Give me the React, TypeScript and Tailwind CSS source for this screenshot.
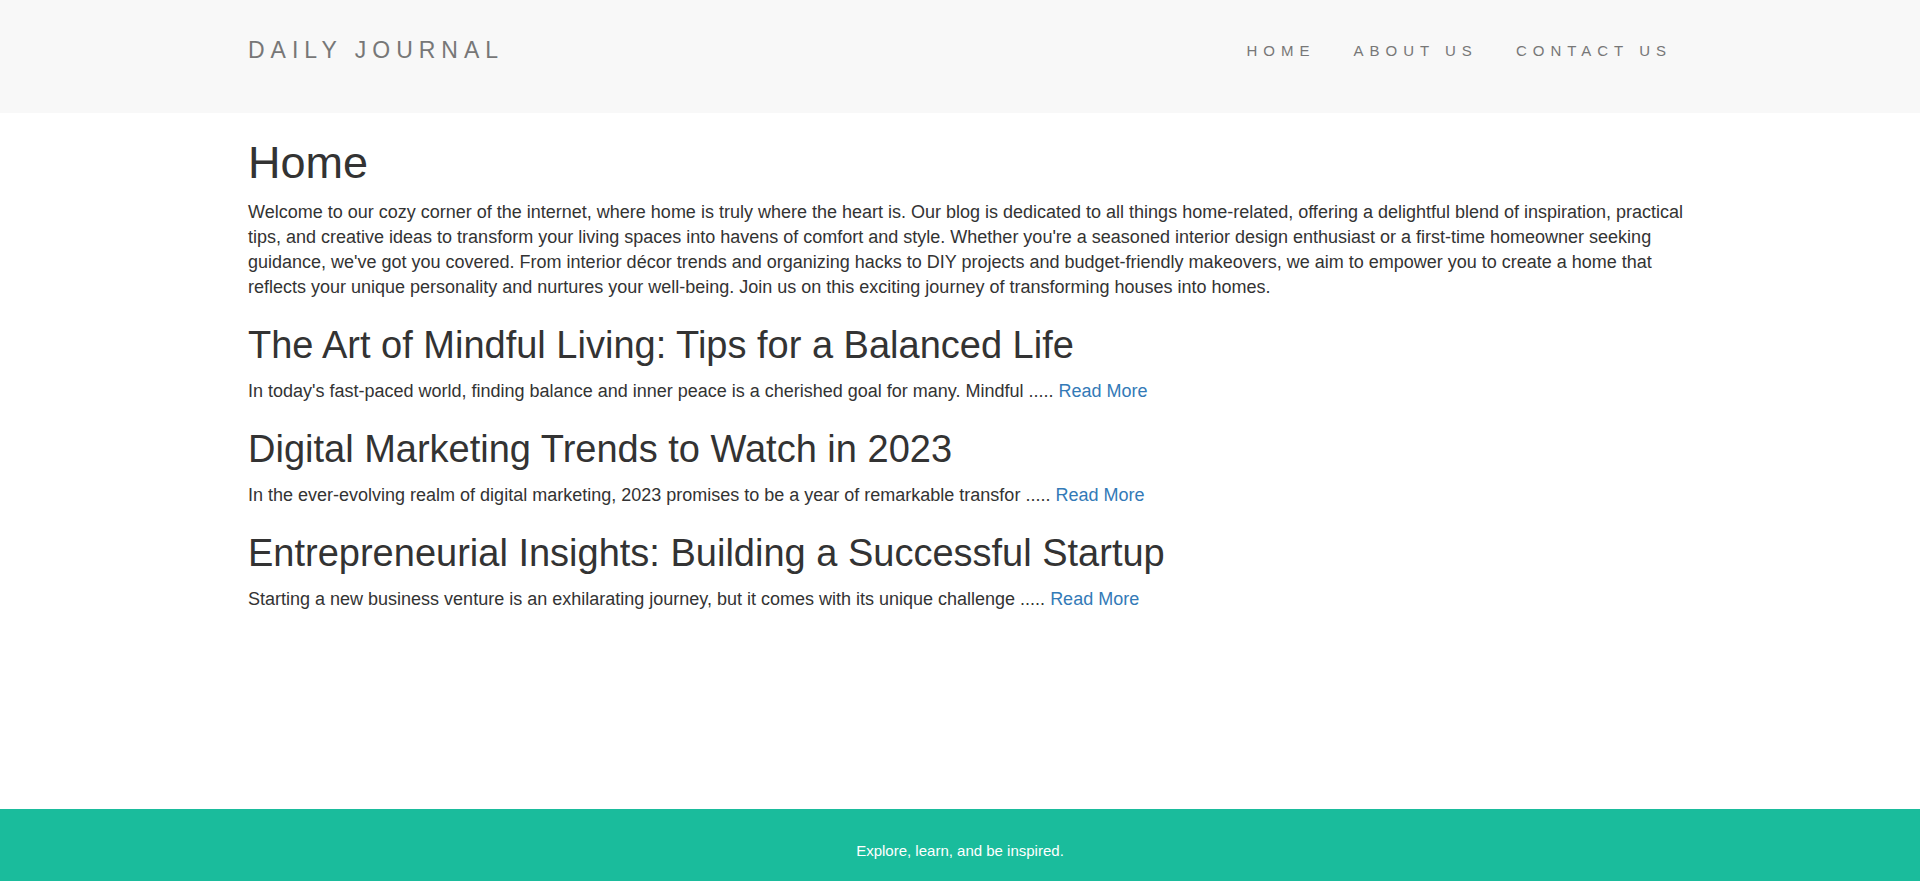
const posts = [
  { title: "The Art of Mindful Living: Tips for a Balanced Life", excerpt: "In today's fast-paced world, finding balance and inner peace is a cherished goal for many. Mindful ....." },
  { title: "Digital Marketing Trends to Watch in 2023", excerpt: "In the ever-evolving realm of digital marketing, 2023 promises to be a year of remarkable transfor ....." },
  { title: "Entrepreneurial Insights: Building a Successful Startup", excerpt: "Starting a new business venture is an exhilarating journey, but it comes with its unique challenge ....." },
];

const links = ["HOME", "ABOUT US", "CONTACT US"];

export default function App() {
  return (
    <div className="flex min-h-screen flex-col bg-white font-['Liberation_Sans',Arial,sans-serif] text-lg leading-[25px] text-[#333333]">
      <nav className="bg-[#f8f8f8] pt-[30px] pb-[30px]">
        <div className="mx-auto flex min-h-[53px] w-full max-w-[1462px] items-start justify-between pl-[19px]">
          <a href="#" className="pt-2 text-[23px] leading-6 tracking-[6px] text-[#777777]">DAILY JOURNAL</a>
          <ul className="flex">
            {links.map((link) => (
              <li key={link}>
                <a href="#" className="block px-[19px] pt-[11px] text-[15px] leading-5 tracking-[6px] text-[#777777]">{link}</a>
              </li>
            ))}
          </ul>
        </div>
      </nav>
      <main className="mx-auto w-full max-w-[1462px] flex-1 pl-[19px] pt-[25px]">
        <h1 className="mb-[12px] text-[45px] leading-[50px]">Home</h1>
        <p>
          Welcome to our cozy corner of the internet, where home is truly where the heart is. Our blog is dedicated to all things home-related, offering a delightful blend of inspiration, practical tips, and creative ideas to transform your living spaces into havens of comfort and style. Whether you're a seasoned interior design enthusiast or a first-time homeowner seeking guidance, we've got you covered. From interior décor trends and organizing hacks to DIY projects and budget-friendly makeovers, we aim to empower you to create a home that reflects your unique personality and nurtures your well-being. Join us on this exciting journey of transforming houses into homes.
        </p>
        {posts.map((post) => (
          <article key={post.title}>
            <h2 className="mt-6 mb-[13px] text-[38px] leading-[42px]">{post.title}</h2>
            <p>{post.excerpt} <a href="#" className="text-[#337ab7]">Read More</a></p>
          </article>
        ))}
      </main>
      <footer className="bg-[#1abc9c] pt-[29px] pb-[18px] text-center text-[15px] text-white">
        <p>Explore, learn, and be inspired.</p>
      </footer>
    </div>
  );
}
